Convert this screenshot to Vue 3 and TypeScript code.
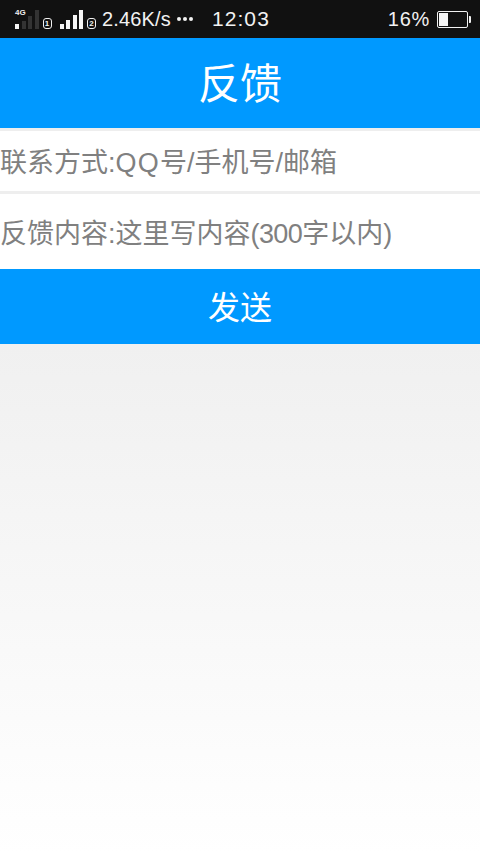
<script setup lang="ts">
const bars1 = [
  { h: 5, on: true },
  { h: 8, on: false },
  { h: 13, on: false },
  { h: 19, on: false },
]
const bars2 = [5, 9, 14, 19]
</script>

<template>
  <div class="page">
    <div class="status">
      <div class="status-left">
        <div class="sig">
          <span class="tag4g">4G</span>
          <span v-for="(b, i) in bars1" :key="i" class="bar" :class="{ on: b.on }" :style="{ height: b.h + 'px' }"></span>
        </div>
        <span class="sim">1</span>
        <div class="sig sig-second">
          <span v-for="(h, i) in bars2" :key="i" class="bar on" :style="{ height: h + 'px' }"></span>
        </div>
        <span class="sim">2</span>
        <span class="speed">2.46K/s</span>
        <span class="dots"><i></i><i></i><i></i></span>
        <span class="time">12:03</span>
      </div>
      <div class="status-right">
        <span class="percent">16%</span>
        <span class="battery"><span class="level"></span></span>
      </div>
    </div>

    <header class="title">反馈</header>

    <div class="field first">联系方式:<span class="wide">QQ</span>号/手机号/邮箱</div>
    <div class="field second">反馈内容:这里写内容<span class="tight">(300</span>字以内<span class="tight">)</span></div>
    <div class="send">发送</div>
    <div class="rest"></div>
  </div>
</template>

<style scoped>
.page {
  width: 480px;
  height: 854px;
  overflow: hidden;
  display: flex;
  flex-direction: column;
  background: #eeeeee;
  font-family: "Liberation Sans", "Noto Sans CJK SC", sans-serif;
}

.status {
  height: 38px;
  flex: none;
  background: #111111;
  color: #f2f2f2;
  display: flex;
  align-items: center;
  justify-content: space-between;
}

.status-left {
  display: flex;
  align-items: center;
  padding-left: 15px;
}

.sig {
  display: flex;
  align-items: flex-end;
  height: 20px;
  gap: 2.5px;
  position: relative;
}

.sig-second {
  margin-left: 8px;
}

.bar {
  width: 4px;
  background: #333333;
}

.bar.on {
  background: #f5f5f5;
}

.tag4g {
  position: absolute;
  left: 0;
  top: 0;
  font-size: 8px;
  font-weight: 700;
  line-height: 8px;
  color: #eeeeee;
}

.sim {
  width: 9px;
  height: 11px;
  margin: 9px 0 0 4px;
  border: 1px solid #f2f2f2;
  border-radius: 3px;
  box-sizing: border-box;
  font-size: 8px;
  font-weight: 700;
  line-height: 9px;
  text-align: center;
}

.speed {
  margin-left: 6px;
  font-size: 20px;
  letter-spacing: 0.15px;
}

.dots {
  display: flex;
  gap: 2px;
  margin-left: 6px;
}

.dots i {
  width: 4px;
  height: 4px;
  border-radius: 50%;
  background: #f2f2f2;
}

.time {
  margin-left: 19px;
  font-size: 21px;
  letter-spacing: 1.1px;
}

.status-right {
  display: flex;
  align-items: center;
  padding-right: 12px;
}

.percent {
  font-size: 20px;
  letter-spacing: 0.7px;
}

.battery {
  position: relative;
  width: 31px;
  height: 17px;
  margin-left: 7px;
  border: 1px solid #f2f2f2;
  border-radius: 2px;
  box-sizing: border-box;
  padding: 1px;
}

.battery::after {
  content: "";
  position: absolute;
  right: -4px;
  top: 4px;
  width: 2px;
  height: 7px;
  background: #f2f2f2;
  border-radius: 0 1px 1px 0;
}

.level {
  display: block;
  width: 9px;
  height: 100%;
  background: #f5f5f5;
}

.title {
  height: 90px;
  flex: none;
  background: #0099ff;
  color: #ffffff;
  font-size: 42px;
  line-height: 94px;
  text-align: center;
}

.field {
  flex: none;
  background: #ffffff;
  color: #808080;
  font-size: 27px;
  white-space: nowrap;
}

.field.first {
  height: 60px;
  line-height: 64px;
  margin-top: 3px;
}

.field.second {
  height: 75px;
  line-height: 80px;
  margin-top: 3px;
}

.wide {
  letter-spacing: 1.2px;
}

.tight {
  letter-spacing: -0.6px;
}

.send {
  height: 75px;
  flex: none;
  background: #0099ff;
  color: #ffffff;
  font-size: 32px;
  line-height: 79px;
  text-align: center;
}

.rest {
  flex: 1;
  background: linear-gradient(180deg, #f0f0f0 0%, #ffffff 100%);
}
</style>
